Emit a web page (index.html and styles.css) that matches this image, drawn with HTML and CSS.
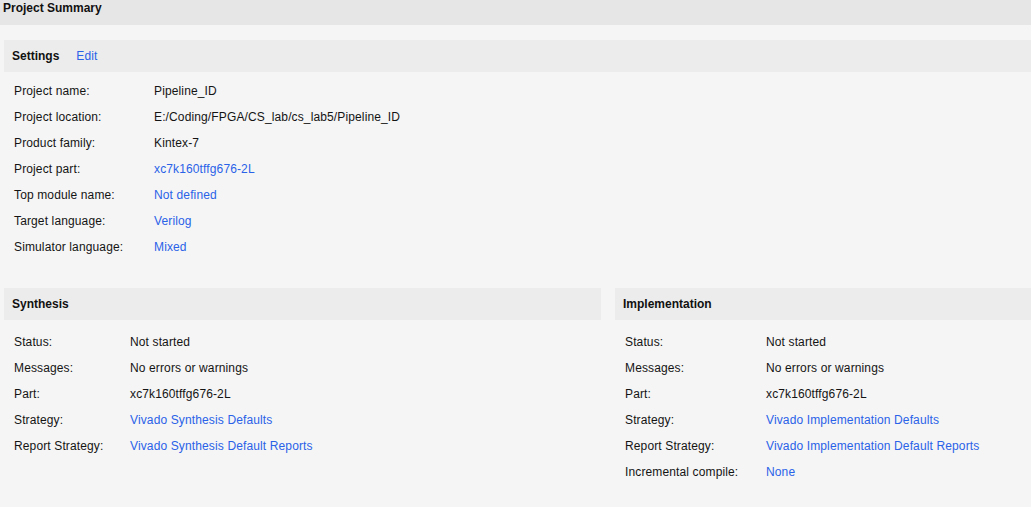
FILE: index.html
```html
<!DOCTYPE html>
<html>
<head>
<meta charset="utf-8">
<link rel="stylesheet" href="styles.css">
</head>
<body>
<div class="titlebar">Project Summary</div>
<div class="content">
  <section class="panel">
    <div class="panel-head"><span class="head-title">Settings</span><a class="link edit">Edit</a></div>
    <div class="rows rows-settings">
      <div class="row"><span class="label">Project name:</span><span class="value">Pipeline_ID</span></div>
      <div class="row"><span class="label">Project location:</span><span class="value">E:/Coding/FPGA/CS_lab/cs_lab5/Pipeline_ID</span></div>
      <div class="row"><span class="label">Product family:</span><span class="value">Kintex-7</span></div>
      <div class="row"><span class="label">Project part:</span><span class="value link">xc7k160tffg676-2L</span></div>
      <div class="row"><span class="label">Top module name:</span><span class="value link">Not defined</span></div>
      <div class="row"><span class="label">Target language:</span><span class="value link">Verilog</span></div>
      <div class="row"><span class="label">Simulator language:</span><span class="value link">Mixed</span></div>
    </div>
  </section>
  <div class="columns">
    <section class="panel">
      <div class="panel-head"><span class="head-title">Synthesis</span></div>
      <div class="rows rows-synth">
        <div class="row"><span class="label">Status:</span><span class="value">Not started</span></div>
        <div class="row"><span class="label">Messages:</span><span class="value">No errors or warnings</span></div>
        <div class="row"><span class="label">Part:</span><span class="value">xc7k160tffg676-2L</span></div>
        <div class="row"><span class="label">Strategy:</span><span class="value link">Vivado Synthesis Defaults</span></div>
        <div class="row"><span class="label">Report Strategy:</span><span class="value link">Vivado Synthesis Default Reports</span></div>
      </div>
    </section>
    <section class="panel">
      <div class="panel-head"><span class="head-title">Implementation</span></div>
      <div class="rows rows-impl">
        <div class="row"><span class="label">Status:</span><span class="value">Not started</span></div>
        <div class="row"><span class="label">Messages:</span><span class="value">No errors or warnings</span></div>
        <div class="row"><span class="label">Part:</span><span class="value">xc7k160tffg676-2L</span></div>
        <div class="row"><span class="label">Strategy:</span><span class="value link">Vivado Implementation Defaults</span></div>
        <div class="row"><span class="label">Report Strategy:</span><span class="value link">Vivado Implementation Default Reports</span></div>
        <div class="row"><span class="label">Incremental compile:</span><span class="value link">None</span></div>
      </div>
    </section>
  </div>
</div>
</body>
</html>
```

FILE: styles.css
```css
html, body {
  margin: 0;
  padding: 0;
}
body {
  background: #f5f5f5;
  font-family: "Liberation Sans", Arial, sans-serif;
  font-size: 12px;
  color: #141414;
  width: 1031px;
  height: 507px;
  overflow: hidden;
}
.titlebar {
  height: 25px;
  line-height: 17px;
  padding-left: 3px;
  background: #e6e6e6;
  font-weight: bold;
  color: #111;
}
.content {
  padding: 15px 0 0 4px;
}
.panel-head {
  height: 32px;
  line-height: 32px;
  padding-left: 8px;
  background: #ececec;
  display: flex;
  align-items: center;
}
.head-title {
  font-weight: bold;
  color: #111;
}
.link {
  color: #2a62e8;
}
.edit {
  margin-left: 17px;
  letter-spacing: 0.13px;
}
.rows {
  padding-left: 10px;
  letter-spacing: 0.13px;
}
.rows-settings {
  padding-top: 6px;
}
.row {
  display: flex;
  height: 26px;
  line-height: 26px;
}
.rows-settings .label { width: 140px; }
.rows-synth .label { width: 116px; }
.rows-impl .label { width: 141px; }
.columns {
  display: grid;
  grid-template-columns: 597px 1fr;
  column-gap: 14px;
  margin-top: 28px;
}
.rows-synth, .rows-impl {
  padding-top: 9px;
}
```
